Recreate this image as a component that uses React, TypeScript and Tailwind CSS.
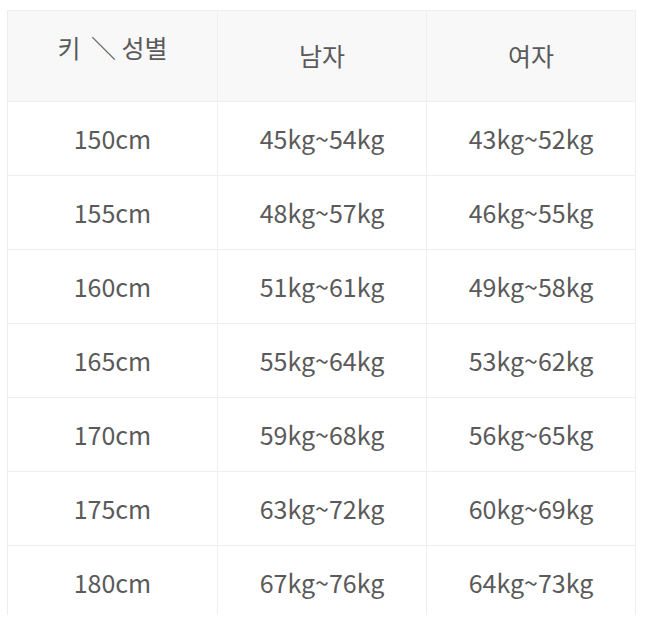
const rows: [string, string, string][] = [
  ['150cm', '45kg~54kg', '43kg~52kg'],
  ['155cm', '48kg~57kg', '46kg~55kg'],
  ['160cm', '51kg~61kg', '49kg~58kg'],
  ['165cm', '55kg~64kg', '53kg~62kg'],
  ['170cm', '59kg~68kg', '56kg~65kg'],
  ['175cm', '63kg~72kg', '60kg~69kg'],
  ['180cm', '67kg~76kg', '64kg~73kg'],
];

export default function App() {
  return (
    <div
      className="w-[647px] h-[627px] bg-white text-[#5a5a5a] text-[25px]"
      style={{ fontFamily: '"Noto Sans CJK KR", "Noto Sans", sans-serif' }}
    >
      <div className="pt-[10px] pl-[7px] w-[636px] h-[615px] overflow-hidden">
        <div className="border-l border-r border-t border-[#eeeeee]">
          <div className="grid grid-cols-3 h-[91px] bg-[#f8f8f8] border-b border-[#eeeeee]">
            <div className="flex items-center justify-center pb-[17px] whitespace-pre">
              키 <span className="ml-[5px]">＼</span> 성별
            </div>
            <div className="flex items-center justify-center border-l border-[#eeeeee]">남자</div>
            <div className="flex items-center justify-center border-l border-[#eeeeee]">여자</div>
          </div>
          {rows.map(([h, m, f]) => (
            <div key={h} className="grid grid-cols-3 h-[74px] border-b border-[#eeeeee]">
              <div className="flex items-center justify-center">{h}</div>
              <div className="flex items-center justify-center border-l border-[#eeeeee]">{m}</div>
              <div className="flex items-center justify-center border-l border-[#eeeeee]">{f}</div>
            </div>
          ))}
        </div>
      </div>
    </div>
  );
}
